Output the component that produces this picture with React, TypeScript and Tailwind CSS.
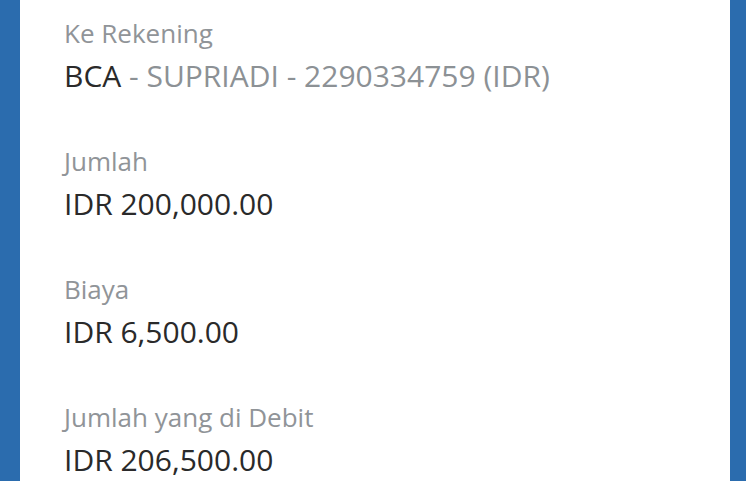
export default function App() {
  const rows = [
    { label: "Jumlah", value: "IDR 200,000.00" },
    { label: "Biaya", value: "IDR 6,500.00" },
    { label: "Jumlah yang di Debit", value: "IDR 206,500.00" },
  ];
  return (
    <div className="h-[481px] w-[746px] overflow-hidden bg-[#2b6cae] px-[20px] [font-family:'Open_Sans',sans-serif]">
      <div className="h-full w-[710px] bg-white pl-[44px] pt-[17px]">
        <div className="flex flex-col gap-[49px]">
          <div className="flex flex-col gap-[7px]">
            <div className="text-[26px] leading-[32px] text-[#909498]">Ke Rekening</div>
            <div className="text-[30px] leading-[40px] text-[#8c9195] whitespace-nowrap">
              <span className="text-[#2a2a2a]">BCA</span> - SUPRIADI - 2290334759 (IDR)
            </div>
          </div>
          {rows.map((r) => (
            <div key={r.label} className="flex flex-col gap-[7px]">
              <div className="text-[26px] leading-[32px] text-[#909498]">{r.label}</div>
              <div className="text-[30px] leading-[40px] text-[#2a2a2a]">{r.value}</div>
            </div>
          ))}
        </div>
      </div>
    </div>
  );
}
